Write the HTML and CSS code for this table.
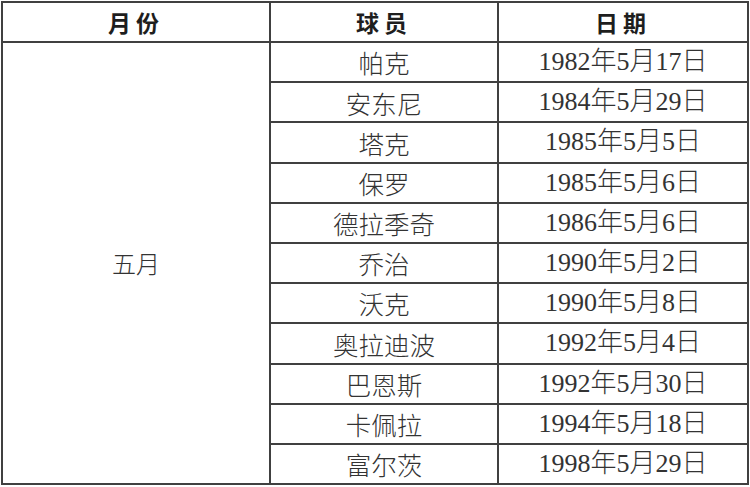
FILE: index.html
```html
<!DOCTYPE html>
<html lang="zh-CN">
<head>
<meta charset="utf-8">
<title>五月出生球员</title>
<link rel="stylesheet" href="styles.css">
</head>
<body>
<table class="roster">
  <colgroup>
    <col class="col-month">
    <col class="col-player">
    <col class="col-date">
  </colgroup>
  <thead>
    <tr class="head-row">
      <th>月份</th>
      <th>球员</th>
      <th>日期</th>
    </tr>
  </thead>
  <tbody>
    <tr><td class="month" rowspan="11">五月</td><td>帕克</td><td class="date">1982年5月17日</td></tr>
    <tr><td>安东尼</td><td class="date">1984年5月29日</td></tr>
    <tr><td>塔克</td><td class="date">1985年5月5日</td></tr>
    <tr><td>保罗</td><td class="date">1985年5月6日</td></tr>
    <tr><td>德拉季奇</td><td class="date">1986年5月6日</td></tr>
    <tr><td>乔治</td><td class="date">1990年5月2日</td></tr>
    <tr><td>沃克</td><td class="date">1990年5月8日</td></tr>
    <tr><td>奥拉迪波</td><td class="date">1992年5月4日</td></tr>
    <tr><td>巴恩斯</td><td class="date">1992年5月30日</td></tr>
    <tr><td>卡佩拉</td><td class="date">1994年5月18日</td></tr>
    <tr><td>富尔茨</td><td class="date">1998年5月29日</td></tr>
  </tbody>
</table>
</body>
</html>
```

FILE: styles.css
```css
html, body {
  margin: 0;
  padding: 0;
  background: #ffffff;
}

body {
  padding: 1px 0 0 1px;
  font-family: "Liberation Serif", "Noto Sans CJK SC", serif;
  color: #333333;
}

.roster {
  border-collapse: collapse;
  table-layout: fixed;
  width: 746px;
  border: 2px solid #404040;
}

.col-month { width: 268px; }
.col-player { width: 228px; }
.col-date { width: 250px; }

.roster th,
.roster td {
  border: 2px solid #404040;
  padding: 0;
  text-align: center;
  vertical-align: middle;
  line-height: 1;
}

.head-row {
  height: 40px;
}

.roster th {
  font-family: "Noto Sans CJK SC", sans-serif;
  font-weight: 700;
  font-size: 23px;
  letter-spacing: 5px;
  color: #1e1e1e;
}

.roster tbody tr {
  height: 40.2px;
}

.roster td {
  font-family: "Noto Sans CJK SC", sans-serif;
  font-weight: 300;
  font-size: 25.5px;
}

.roster td.month {
  font-size: 24px;
}

.roster td.date {
  font-family: "Liberation Serif", "Noto Sans CJK SC", serif;
  font-size: 26px;
}
```
